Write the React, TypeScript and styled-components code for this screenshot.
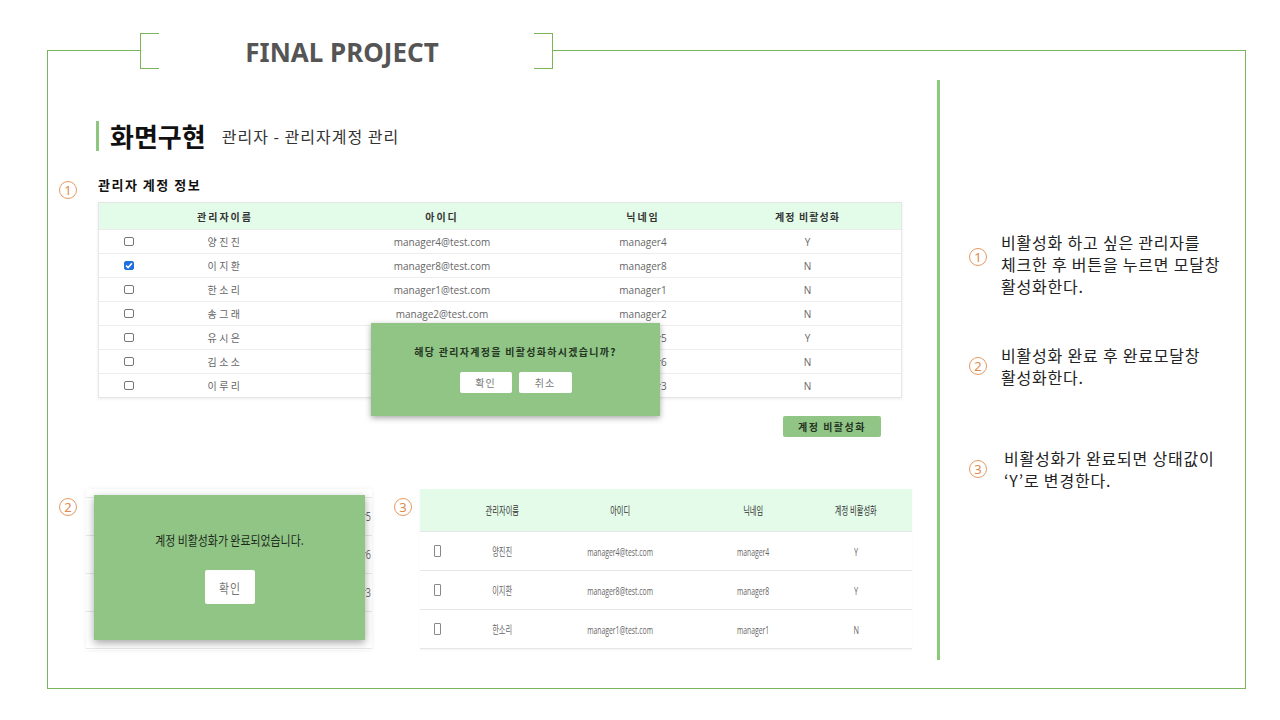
import React from "react";
import styled, { createGlobalStyle } from "styled-components";

const GREEN_LINE = "#7ab55c";
const MODAL_GREEN = "#90c586";
const HEAD_BG = "#e3fbe9";
const ORANGE = "#e49a62";
const KR = `"Noto Sans CJK KR", "Noto Sans", sans-serif`;
const LATIN_KR = `"Open Sans", "Noto Sans CJK KR", sans-serif`;

const Global = createGlobalStyle`
  html, body { margin: 0; padding: 0; background: #fff; }
  body { font-family: ${KR}; color: #222; }
  * { box-sizing: border-box; }
`;

const Page = styled.div`
  width: 1280px;
  height: 720px;
  padding: 50px 0 0 47px;
  background: #fff;
  overflow: hidden;
`;

const Frame = styled.div`
  position: relative;
  width: 1199px;
  height: 639px;
  border: 1px solid ${GREEN_LINE};
  display: flex;
`;

const TitleTab = styled.div`
  position: absolute;
  top: -18px;
  left: 92px;
  width: 413px;
  height: 36px;
  background: #fff;
  display: flex;
`;

const Bracket = styled.div<{ $side: "left" | "right" }>`
  width: 19px;
  height: 36px;
  border-top: 1px solid ${GREEN_LINE};
  border-bottom: 1px solid ${GREEN_LINE};
  ${(p) => (p.$side === "left" ? "border-left" : "border-right")}: 1px solid ${GREEN_LINE};
`;

const Title = styled.div`
  flex: 1;
  padding-right: 9px;
  text-align: center;
  font-family: "Noto Sans", sans-serif;
  font-weight: 700;
  font-size: 26px;
  line-height: 38px;
  color: #555;
`;

const Main = styled.div`
  width: 889px;
  padding-top: 70px;
  display: flex;
  flex-direction: column;
`;

const Divider = styled.div`
  width: 3px;
  margin: 29px 0 28px;
  background: #8cc97a;
`;

const Notes = styled.div`
  flex: 1;
  padding: 180px 0 0 29px;
  display: flex;
  flex-direction: column;
`;

const Heading = styled.div`
  display: flex;
  align-items: center;
  margin-left: 48px;
  height: 30px;
`;

const HeadBar = styled.div`
  width: 3px;
  height: 30px;
  background: #8dc67c;
`;

const HeadTitle = styled.div`
  margin-left: 11px;
  font-size: 26px;
  font-weight: 700;
  line-height: 30px;
  color: #111;
`;

const HeadSub = styled.div`
  margin-left: 16px;
  font-size: 16px;
  letter-spacing: 1px;
  line-height: 30px;
  color: #333;
`;

const Circle = styled.div<{ $top?: number; $left?: number; $shift?: number }>`
  flex: none;
  width: 18px;
  height: 18px;
  margin-top: ${(p) => p.$top ?? 0}px;
  margin-left: ${(p) => p.$left ?? 0}px;
  transform: translateY(${(p) => p.$shift ?? 0}px);
  border: 1px solid ${ORANGE};
  border-radius: 50%;
  color: #e08a4c;
  font-family: "Noto Sans", sans-serif;
  font-size: 13px;
  line-height: 16px;
  text-align: center;
`;

const SectionHead = styled.div`
  display: flex;
  align-items: flex-start;
  margin-top: 26px;
  padding-left: 11px;
`;

const SectionLabel = styled.div`
  margin-left: 21px;
  font-size: 13px;
  font-weight: 700;
  letter-spacing: 1.5px;
  line-height: 16px;
  color: #111;
`;

const TableWrap = styled.div`
  position: relative;
  margin: 7px 0 0 50px;
  width: 804px;
  border: 1px solid #e6e6e6;
  box-shadow: 0 1px 3px rgba(0, 0, 0, 0.08);
  background: #fff;
`;

const Row1 = styled.div<{ $head?: boolean }>`
  display: grid;
  grid-template-columns: 59px 134px 300px 102px 1fr;
  height: ${(p) => (p.$head ? 26 : 24)}px;
  align-items: center;
  background: ${(p) => (p.$head ? HEAD_BG : "#fff")};
  border-top: ${(p) => (p.$head ? "none" : "1px solid #ececec")};
  font-family: ${LATIN_KR};
  font-size: 10px;
  font-weight: ${(p) => (p.$head ? 700 : 400)};
  color: ${(p) => (p.$head ? "#333" : "#666")};
`;

const Cell = styled.div<{ $pad?: number; $spacing?: number }>`
  text-align: center;
  padding-left: ${(p) => p.$pad ?? 0}px;
  letter-spacing: ${(p) => p.$spacing ?? 0}px;
  white-space: nowrap;
  display: flex;
  justify-content: center;
  align-items: center;
`;

const Check = styled.span<{ $on?: boolean }>`
  display: inline-flex;
  align-items: center;
  justify-content: center;
  width: 10px;
  height: 9px;
  border: 1px solid ${(p) => (p.$on ? "#1f6fe0" : "#777")};
  border-radius: 2px;
  background: ${(p) => (p.$on ? "#1f6fe0" : "#fff")};
`;

const Modal1 = styled.div`
  position: absolute;
  left: 272px;
  top: 120px;
  width: 289px;
  height: 93px;
  background: ${MODAL_GREEN};
  box-shadow: 0 2px 6px rgba(0, 0, 0, 0.35);
  display: flex;
  flex-direction: column;
  align-items: center;
  padding-top: 22px;
`;

const Modal1Text = styled.div`
  font-size: 10px;
  font-weight: 700;
  letter-spacing: 1.3px;
  line-height: 14px;
  color: #24331f;
`;

const BtnGroup = styled.div<{ $top: number }>`
  display: flex;
  gap: 7px;
  margin-top: ${(p) => p.$top}px;
`;

const WhiteBtn = styled.div<{ $w: number; $h: number; $size: number }>`
  width: ${(p) => p.$w}px;
  height: ${(p) => p.$h}px;
  background: #fff;
  border-radius: 2px;
  display: flex;
  align-items: center;
  justify-content: center;
  font-size: ${(p) => p.$size}px;
  color: #777;
  letter-spacing: 1px;
`;

const ButtonRow = styled.div`
  display: flex;
  justify-content: flex-end;
  margin: 18px 0 0 50px;
  width: 804px;
  padding-right: 21px;
`;

const ActionBtn = styled.div`
  width: 98px;
  height: 21px;
  border-radius: 2px;
  background: ${MODAL_GREEN};
  display: flex;
  align-items: center;
  justify-content: center;
  font-size: 10px;
  font-weight: 700;
  letter-spacing: 1.5px;
  color: #24331f;
`;

const Bottom = styled.div`
  display: flex;
  align-items: flex-start;
  margin-top: 52px;
  padding-left: 11px;
`;

const FragmentWrap = styled.div`
  position: relative;
  margin-left: 9px;
  width: 286px;
  height: 161px;
`;

const FragmentLines = styled.div`
  width: 286px;
  height: 161px;
  overflow: hidden;
  padding-top: 8px;
  box-shadow: 0 0 4px rgba(0, 0, 0, 0.07);
`;

const FragRow = styled.div`
  height: 38px;
  border-top: 1px solid #e8e8e8;
  display: flex;
  align-items: center;
  justify-content: flex-end;
  padding-right: 1px;
  font-family: ${LATIN_KR};
  font-size: 12px;
  color: #666;
  &:last-child { border-bottom: 1px solid #e8e8e8; }
`;

const Squeeze = styled.span<{ $x: number }>`
  display: inline-block;
  transform: scaleX(${(p) => p.$x});
  transform-origin: center;
  white-space: nowrap;
`;

const RightSqueeze = styled(Squeeze)`
  transform-origin: right center;
`;

const Modal2 = styled.div`
  position: absolute;
  left: 8px;
  top: 6px;
  width: 271px;
  height: 145px;
  background: ${MODAL_GREEN};
  box-shadow: 0 3px 8px rgba(0, 0, 0, 0.35);
  display: flex;
  flex-direction: column;
  align-items: center;
  padding-top: 36px;
`;

const Modal2Text = styled.div`
  font-size: 13px;
  line-height: 18px;
  color: #1d2a1a;
`;

const Table3 = styled.div`
  margin-left: 8px;
  width: 492px;
  background: #fff;
  box-shadow: 0 1px 2px rgba(0, 0, 0, 0.05);
`;

const Row3 = styled.div<{ $head?: boolean }>`
  display: grid;
  grid-template-columns: 50px 64px 172px 94px 112px;
  height: ${(p) => (p.$head ? 43 : 39)}px;
  align-items: center;
  background: ${(p) => (p.$head ? "#e4fbe9" : "#fff")};
  border-bottom: 1px solid #e6e6e6;
  font-family: ${LATIN_KR};
  font-size: 11px;
  color: ${(p) => (p.$head ? "#333" : "#666")};
`;

const Cell3 = styled.div<{ $left?: boolean }>`
  display: flex;
  justify-content: ${(p) => (p.$left ? "flex-start" : "center")};
  padding-left: ${(p) => (p.$left ? 14 : 0)}px;
`;

const TallBox = styled.span`
  display: inline-block;
  width: 7px;
  height: 12px;
  border: 1px solid #888;
  border-radius: 1px;
`;

const NoteItem = styled.div<{ $top?: number }>`
  display: flex;
  align-items: center;
  margin-top: ${(p) => p.$top ?? 0}px;
`;

const NoteText = styled.div<{ $gap: number }>`
  margin-left: ${(p) => p.$gap}px;
  font-size: 16px;
  letter-spacing: 0.8px;
  line-height: 22px;
  color: #222;
  white-space: nowrap;
`;

const rows1 = [
  { name: "양진진", id: "manager4@test.com", nick: "manager4", st: "Y" },
  { name: "이지환", id: "manager8@test.com", nick: "manager8", st: "N", on: true },
  { name: "한소리", id: "manager1@test.com", nick: "manager1", st: "N" },
  { name: "송그래", id: "manage2@test.com", nick: "manager2", st: "N" },
  { name: "유시은", id: "manager5@test.com", nick: "manager5", st: "Y" },
  { name: "김소소", id: "manager6@test.com", nick: "manager6", st: "N" },
  { name: "이루리", id: "manager3@test.com", nick: "manager3", st: "N" },
];

const rows3 = [
  { name: "양진진", id: "manager4@test.com", nick: "manager4", st: "Y" },
  { name: "이지환", id: "manager8@test.com", nick: "manager8", st: "Y" },
  { name: "한소리", id: "manager1@test.com", nick: "manager1", st: "N" },
];

const Tick = () => (
  <svg width="8" height="7" viewBox="0 0 8 7">
    <path d="M1 3.6 L3.1 5.6 L7 1.2" stroke="#fff" strokeWidth="1.5" fill="none" />
  </svg>
);

export default function App() {
  return (
    <Page>
      <Global />
      <Frame>
        <TitleTab>
          <Bracket $side="left" />
          <Title>FINAL PROJECT</Title>
          <Bracket $side="right" />
        </TitleTab>

        <Main>
          <Heading>
            <HeadBar />
            <HeadTitle>화면구현</HeadTitle>
            <HeadSub>관리자 - 관리자계정 관리</HeadSub>
          </Heading>

          <SectionHead>
            <Circle $shift={4}>1</Circle>
            <SectionLabel>관리자 계정 정보</SectionLabel>
          </SectionHead>

          <TableWrap>
            <Row1 $head>
              <Cell />
              <Cell $spacing={2}>관리자이름</Cell>
              <Cell $spacing={2}>아이디</Cell>
              <Cell $spacing={2}>닉네임</Cell>
              <Cell $spacing={1} $pad={20}>계정 비활성화</Cell>
            </Row1>
            {rows1.map((r) => (
              <Row1 key={r.nick}>
                <Cell>
                  <Check $on={r.on}>{r.on && <Tick />}</Check>
                </Cell>
                <Cell $spacing={2.5}>{r.name}</Cell>
                <Cell>{r.id}</Cell>
                <Cell>{r.nick}</Cell>
                <Cell $pad={20}>{r.st}</Cell>
              </Row1>
            ))}
            <Modal1>
              <Modal1Text>해당 관리자계정을 비활성화하시겠습니까?</Modal1Text>
              <BtnGroup $top={13}>
                <WhiteBtn $w={52} $h={21} $size={10}>확인</WhiteBtn>
                <WhiteBtn $w={53} $h={21} $size={10}>취소</WhiteBtn>
              </BtnGroup>
            </Modal1>
          </TableWrap>

          <ButtonRow>
            <ActionBtn>계정 비활성화</ActionBtn>
          </ButtonRow>

          <Bottom>
            <Circle $top={9}>2</Circle>
            <FragmentWrap>
              <FragmentLines>
                {["manager5", "manager6", "manager3"].map((n) => (
                  <FragRow key={n}>
                    <RightSqueeze $x={0.75}>{n}</RightSqueeze>
                  </FragRow>
                ))}
                <FragRow />
              </FragmentLines>
              <Modal2>
                <Modal2Text>
                  <Squeeze $x={0.84}>계정 비활성화가 완료되었습니다.</Squeeze>
                </Modal2Text>
                <BtnGroup $top={21}>
                  <WhiteBtn $w={50} $h={34} $size={13}>
                    <Squeeze $x={0.84}>확인</Squeeze>
                  </WhiteBtn>
                </BtnGroup>
              </Modal2>
            </FragmentWrap>

            <Circle $top={9} $left={22}>3</Circle>
            <Table3>
              <Row3 $head>
                <Cell3 />
                <Cell3><Squeeze $x={0.66}>관리자이름</Squeeze></Cell3>
                <Cell3><Squeeze $x={0.66}>아이디</Squeeze></Cell3>
                <Cell3><Squeeze $x={0.66}>닉네임</Squeeze></Cell3>
                <Cell3><Squeeze $x={0.66}>계정 비활성화</Squeeze></Cell3>
              </Row3>
              {rows3.map((r) => (
                <Row3 key={r.nick}>
                  <Cell3 $left><TallBox /></Cell3>
                  <Cell3><Squeeze $x={0.66}>{r.name}</Squeeze></Cell3>
                  <Cell3><Squeeze $x={0.62}>{r.id}</Squeeze></Cell3>
                  <Cell3><Squeeze $x={0.62}>{r.nick}</Squeeze></Cell3>
                  <Cell3><Squeeze $x={0.66}>{r.st}</Squeeze></Cell3>
                </Row3>
              ))}
            </Table3>
          </Bottom>
        </Main>

        <Divider />

        <Notes>
          <NoteItem>
            <Circle $shift={-7}>1</Circle>
            <NoteText $gap={14}>
              비활성화 하고 싶은 관리자를
              <br />
              체크한 후 버튼을 누르면 모달창
              <br />
              활성화한다.
            </NoteText>
          </NoteItem>
          <NoteItem $top={47}>
            <Circle>2</Circle>
            <NoteText $gap={14}>
              비활성화 완료 후 완료모달창
              <br />
              활성화한다.
            </NoteText>
          </NoteItem>
          <NoteItem $top={59}>
            <Circle>3</Circle>
            <NoteText $gap={17}>
              비활성화가 완료되면 상태값이
              <br />
              ‘Y’로 변경한다.
            </NoteText>
          </NoteItem>
        </Notes>
      </Frame>
    </Page>
  );
}
